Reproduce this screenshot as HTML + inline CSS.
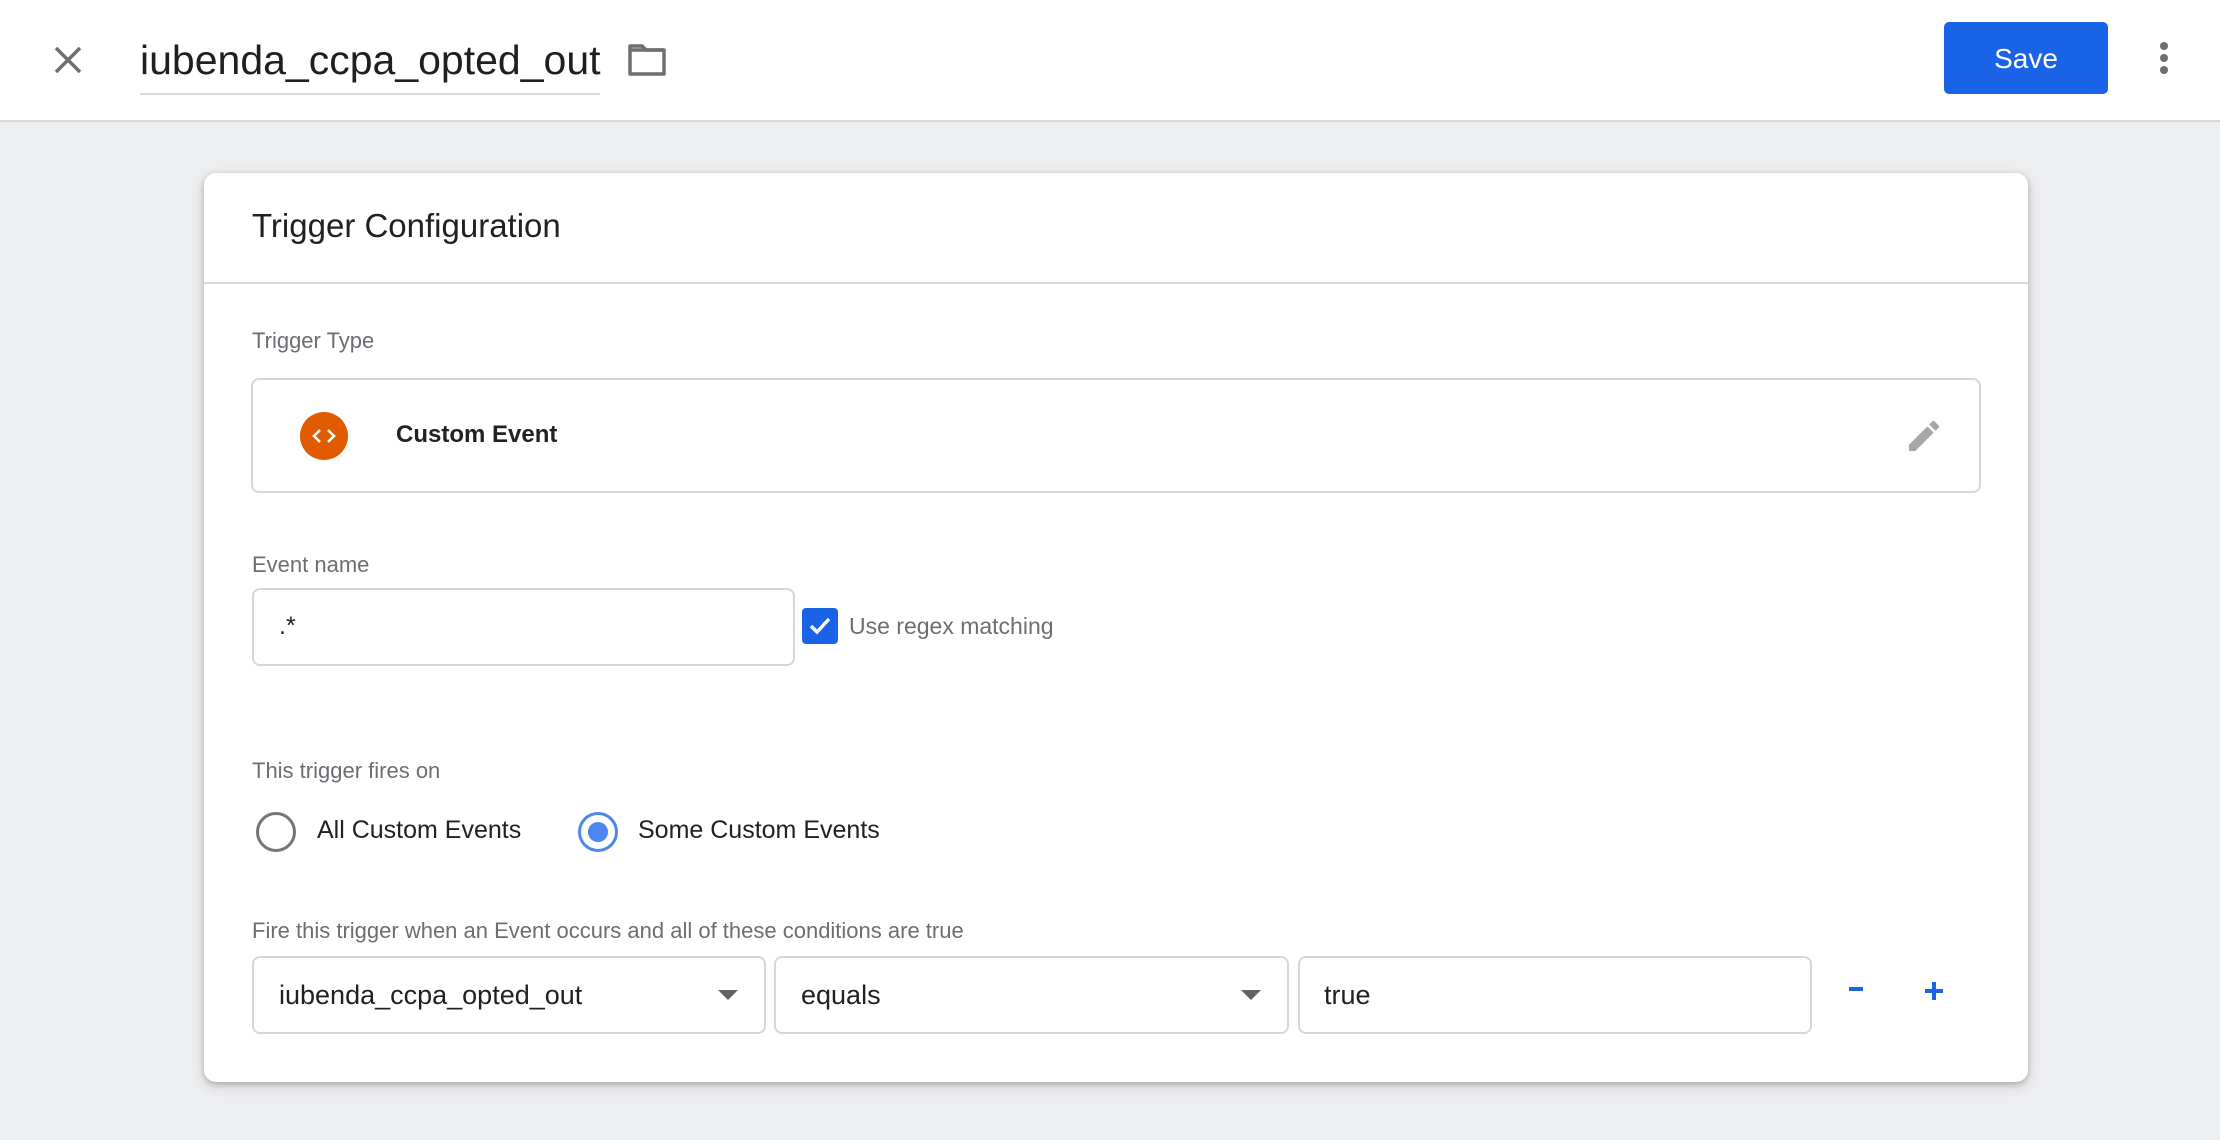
<!DOCTYPE html>
<html><head><meta charset="utf-8"><style>
*{margin:0;padding:0;box-sizing:border-box}
body{width:2220px;height:1140px;background:#edeef0;font-family:"Liberation Sans",Arial,sans-serif;position:relative;overflow:hidden}
.a{position:absolute;line-height:1;white-space:nowrap}
.hdr{position:absolute;left:0;top:0;width:2220px;height:122px;background:#fff;border-bottom:2px solid #d7d9dc}
.card{position:absolute;left:204px;top:173px;width:1824px;height:909px;background:#fff;border-radius:12px;box-shadow:0 2px 6px rgba(0,0,0,.22),0 4px 14px rgba(0,0,0,.12)}
.box{position:absolute;border:2px solid #d5d7da;border-radius:8px;background:#fff}
.lbl{color:#6b6e72;font-size:22px}
.txt{color:#202124}
.arrow{position:absolute;width:0;height:0;border-left:10px solid transparent;border-right:10px solid transparent;border-top:10px solid #5f6368}
</style></head><body>
<div class="hdr"></div>
<svg class="a" style="left:52px;top:44px" width="32" height="32" viewBox="0 0 32 32"><path d="M4 4L28 28M28 4L4 28" stroke="#6f6f6f" stroke-width="3.5"/></svg>
<div class="a txt" style="left:140px;top:40px;font-size:41px;color:#1f1f1f">iubenda_ccpa_opted_out</div>
<div class="a" style="left:140px;top:93px;width:460px;height:2px;background:#d7d9dc"></div>
<svg class="a" style="left:627px;top:42px" width="40" height="36" viewBox="0 0 40 36"><path d="M3 4h12l4 4h18v24H3z" fill="none" stroke="#6f6f6f" stroke-width="3.5" stroke-linejoin="round"/><path d="M3 8h34" stroke="#6f6f6f" stroke-width="3.5"/></svg>
<div class="a" style="left:1944px;top:22px;width:164px;height:72px;background:#1a63e6;border-radius:5px;color:#fff;font-size:28px;text-align:center;line-height:74px">Save</div>
<div class="a" style="left:2160px;top:42px;width:8px;height:8px;border-radius:50%;background:#6f6f6f"></div>
<div class="a" style="left:2160px;top:54px;width:8px;height:8px;border-radius:50%;background:#6f6f6f"></div>
<div class="a" style="left:2160px;top:66px;width:8px;height:8px;border-radius:50%;background:#6f6f6f"></div>

<div class="card"></div>
<div class="a txt" style="left:252px;top:209px;font-size:33px">Trigger Configuration</div>
<div class="a" style="left:204px;top:282px;width:1824px;height:2px;background:#d7d9dc"></div>
<div class="a lbl" style="left:252px;top:330px">Trigger Type</div>
<div class="box" style="left:251px;top:378px;width:1730px;height:115px"></div>
<div class="a" style="left:300px;top:412px;width:48px;height:48px;border-radius:50%;background:#e05a00"></div>
<svg class="a" style="left:310px;top:426px" width="28" height="20" viewBox="0 0 28 20"><path d="M10 4L4 10l6 6M18 4l6 6-6 6" fill="none" stroke="#fff" stroke-width="2.6"/></svg>
<div class="a txt" style="left:396px;top:423px;font-size:24px;font-weight:bold">Custom Event</div>
<svg class="a" style="left:1904px;top:416px" width="40" height="40" viewBox="0 0 24 24"><path d="M3 17.25V21h3.75L17.81 9.94l-3.75-3.75L3 17.25zM20.71 7.04a1 1 0 000-1.41l-2.34-2.34a1 1 0 00-1.41 0l-1.83 1.83 3.75 3.75 1.83-1.83z" fill="#a6a6a6"/></svg>

<div class="a lbl" style="left:252px;top:554px">Event name</div>
<div class="box" style="left:252px;top:588px;width:543px;height:78px"></div>
<div class="a txt" style="left:279px;top:614px;font-size:25px">.*</div>
<div class="a" style="left:802px;top:608px;width:36px;height:36px;border-radius:4px;background:#1a63e6"></div>
<svg class="a" style="left:806px;top:612px" width="28" height="28" viewBox="0 0 28 28"><path d="M5 14l6 6L23 7" fill="none" stroke="#fff" stroke-width="3.5"/></svg>
<div class="a lbl" style="left:849px;top:615px;font-size:23px">Use regex matching</div>

<div class="a lbl" style="left:252px;top:760px">This trigger fires on</div>
<div class="a" style="left:256px;top:812px;width:40px;height:40px;border-radius:50%;border:3.5px solid #757575"></div>
<div class="a txt" style="left:317px;top:818px;font-size:25px">All Custom Events</div>
<div class="a" style="left:578px;top:812px;width:40px;height:40px;border-radius:50%;border:3.5px solid #4e86f0"></div>
<div class="a" style="left:588px;top:822px;width:20px;height:20px;border-radius:50%;background:#4e86f0"></div>
<div class="a txt" style="left:638px;top:818px;font-size:25px">Some Custom Events</div>

<div class="a lbl" style="left:252px;top:920px">Fire this trigger when an Event occurs and all of these conditions are true</div>
<div class="box" style="left:252px;top:956px;width:514px;height:78px"></div>
<div class="a txt" style="left:279px;top:982px;font-size:27px">iubenda_ccpa_opted_out</div>
<div class="arrow" style="left:718px;top:990px"></div>
<div class="box" style="left:774px;top:956px;width:515px;height:78px"></div>
<div class="a txt" style="left:801px;top:982px;font-size:27px">equals</div>
<div class="arrow" style="left:1241px;top:990px"></div>
<div class="box" style="left:1298px;top:956px;width:514px;height:78px"></div>
<div class="a txt" style="left:1324px;top:982px;font-size:27px">true</div>
<div class="a" style="left:1849px;top:987px;width:14px;height:4px;background:#1a63e6"></div>
<div class="a" style="left:1925px;top:989px;width:18px;height:4px;background:#1a63e6"></div>
<div class="a" style="left:1932px;top:982px;width:4px;height:18px;background:#1a63e6"></div>
</body></html>
